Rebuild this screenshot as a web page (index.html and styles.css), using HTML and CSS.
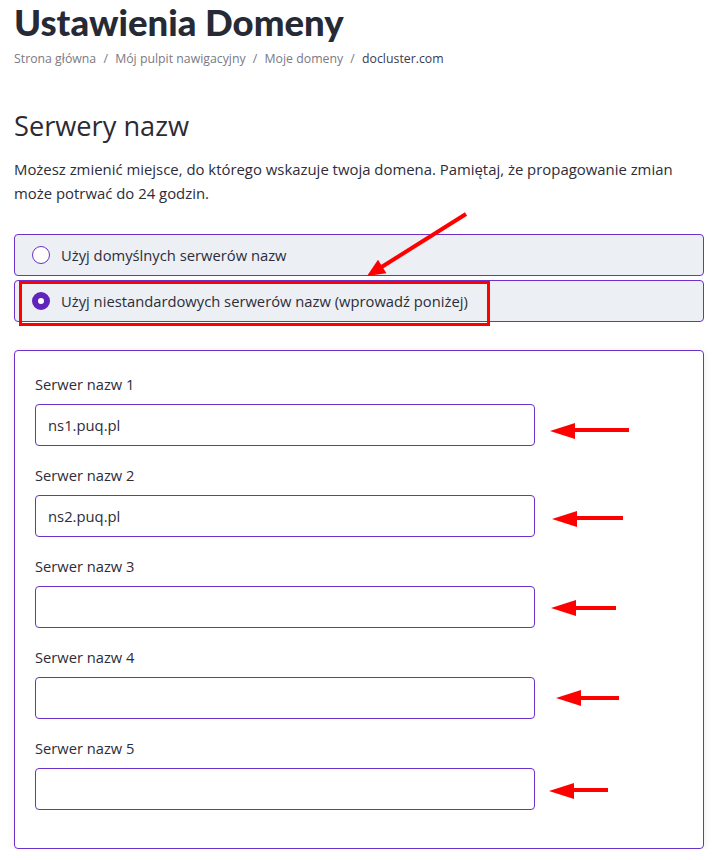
FILE: index.html
```html
<!DOCTYPE html>
<html lang="pl">
<head>
  <meta charset="UTF-8">
  <meta name="viewport" content="width=device-width, initial-scale=1.0">
  <title>Ustawienia Domeny</title>
  <link rel="stylesheet" href="styles.css">
</head>
<body>
<div class="page">
  <h1 class="page-title">Ustawienia Domeny</h1>
  <nav class="breadcrumb">
    <a href="#">Strona główna</a>
    <span class="sep">/</span>
    <a href="#">Mój pulpit nawigacyjny</a>
    <span class="sep">/</span>
    <a href="#">Moje domeny</a>
    <span class="sep">/</span>
    <span class="current">docluster.com</span>
  </nav>

  <h2 class="section-title">Serwery nazw</h2>
  <p class="section-desc">Możesz zmienić miejsce, do którego wskazuje twoja domena. Pamiętaj, że propagowanie zmian może potrwać do 24 godzin.</p>

  <div class="ns-options">
    <label class="ns-option">
      <span class="radio"></span>
      Użyj domyślnych serwerów nazw
    </label>
    <label class="ns-option selected">
      <span class="radio"></span>
      Użyj niestandardowych serwerów nazw (wprowadź poniżej)
    </label>
  </div>

  <div class="ns-card">
    <div class="input-group">
      <label for="ns1">Serwer nazw 1</label>
      <input type="text" id="ns1" value="ns1.puq.pl">
    </div>
    <div class="input-group">
      <label for="ns2">Serwer nazw 2</label>
      <input type="text" id="ns2" value="ns2.puq.pl">
    </div>
    <div class="input-group">
      <label for="ns3">Serwer nazw 3</label>
      <input type="text" id="ns3">
    </div>
    <div class="input-group">
      <label for="ns4">Serwer nazw 4</label>
      <input type="text" id="ns4">
    </div>
    <div class="input-group">
      <label for="ns5">Serwer nazw 5</label>
      <input type="text" id="ns5">
    </div>
  </div>

  <!-- red annotations drawn over the screenshot -->
  <svg class="annotations" width="718" height="860" viewBox="0 0 718 860">
    <rect x="20.5" y="282.5" width="468" height="42" fill="none" stroke="#ff0000" stroke-width="3"/>

    <line x1="466" y1="214" x2="380" y2="268" stroke="#ff0000" stroke-width="4"/>
    <polygon points="367,276 386.4,273.3 378,259.7" fill="#ff0000"/>

    <g fill="#ff0000" stroke="#ff0000">
      <line x1="570" y1="430" x2="629" y2="430" stroke-width="4"/>
      <polygon points="550,431 575,423 575,439" stroke="none"/>

      <line x1="572" y1="518" x2="623" y2="518" stroke-width="4"/>
      <polygon points="552,519 577,511 577,527" stroke="none"/>

      <line x1="571" y1="608" x2="616" y2="608" stroke-width="4"/>
      <polygon points="551,608 576,600 576,616" stroke="none"/>

      <line x1="576" y1="698" x2="619" y2="698" stroke-width="4"/>
      <polygon points="556,698 581,690 581,706" stroke="none"/>

      <line x1="569" y1="790" x2="608" y2="790" stroke-width="4"/>
      <polygon points="549,791 574,783 574,799" stroke="none"/>
    </g>
  </svg>
</div>
</body>
</html>
```

FILE: styles.css
```css
body {
  font-family: "Open Sans", "Noto Sans", sans-serif;
  background-color: #fff;
  color: #2d2d3a;
  margin: 0;
}

.page {
  position: relative;
  padding: 0 14px;
}

.page-title {
  margin: 0;
  font-family: Lato, sans-serif;
  font-size: 36.5px;
  font-weight: 900;
  line-height: 44px;
  color: #262a35;
}

.breadcrumb {
  margin-top: 5px;
  font-size: 12.3px;
  line-height: 20px;
  color: #7a7a85;
}

.breadcrumb a {
  color: #7a7a85;
  text-decoration: none;
}

.breadcrumb .sep {
  margin: 0 4px;
}

.breadcrumb .current {
  color: #3d3a4d;
}

.section-title {
  margin: 39px 0 0;
  font-size: 27.2px;
  font-weight: 400;
  line-height: 36px;
  color: #2b2b36;
}

.section-desc {
  margin: 13px 0 0;
  font-size: 14.9px;
  line-height: 24px;
  color: #2d2d3a;
}

.ns-options {
  margin-top: 29px;
  display: flex;
  flex-direction: column;
  gap: 4px;
}

.ns-option {
  display: flex;
  align-items: center;
  gap: 11px;
  height: 42px;
  box-sizing: border-box;
  padding: 0 17px;
  background-color: #eceff4;
  border: 1px solid #6b31c8;
  border-radius: 4px;
  font-size: 14.75px;
  color: #2d2d3a;
}

.radio {
  width: 18px;
  height: 18px;
  box-sizing: border-box;
  border: 1.5px solid #6b31c8;
  border-radius: 50%;
  background-color: #fff;
}

.ns-option.selected .radio {
  border: 6px solid #5f24ba;
  background-color: #fff;
}

.ns-card {
  margin-top: 28px;
  padding: 23px 20px 19px;
  border: 1px solid #6b31c8;
  border-radius: 4px;
  box-shadow: 0 2px 8px rgba(0, 0, 0, 0.08);
}

.input-group {
  margin-bottom: 19px;
}

.input-group label {
  display: block;
  margin-bottom: 10px;
  font-size: 14.7px;
  line-height: 20px;
  color: #2d2d3a;
}

.input-group input {
  display: block;
  width: 500px;
  height: 42px;
  padding: 0 12px;
  border: 1px solid #6b31c8;
  border-radius: 4px;
  box-sizing: border-box;
  font-family: inherit;
  font-size: 14.8px;
  color: #2d2d3a;
  background-color: #fff;
}

.annotations {
  position: absolute;
  top: 0;
  left: 0;
  pointer-events: none;
}
```
